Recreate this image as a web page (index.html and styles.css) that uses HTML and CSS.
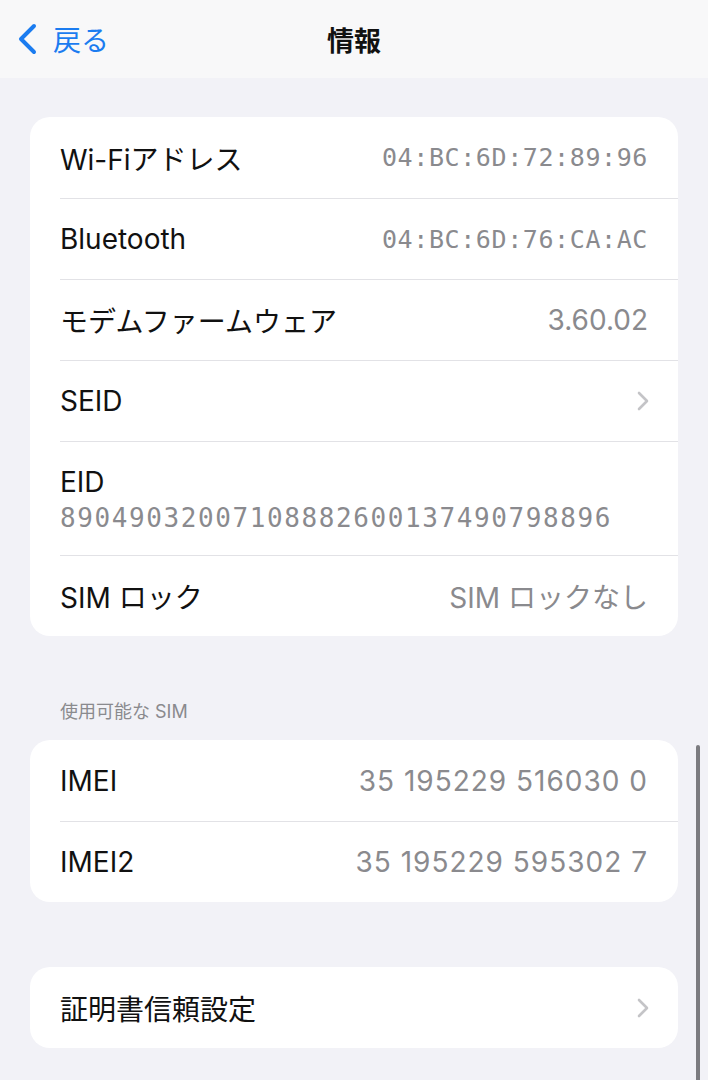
FILE: index.html
```html
<html>
  <head>
    <meta charset="utf-8">
    <title>情報</title>
    <link rel="stylesheet" href="styles.css">
  </head>
<body>
  <div class="navbar">
    <div class="back">
      <svg class="back-icon" width="24" height="32" viewBox="0 0 24 32">
        <path d="M19 3 L6 16 L19 29" fill="none" stroke="#1b7cf0" stroke-width="4" stroke-linecap="round" stroke-linejoin="round"/>
      </svg>
      <span>戻る</span>
    </div>
    <div class="title">情報</div>
    <div></div>
  </div>

  <div class="group first">
    <div class="row">
      <span class="label">Wi-Fiアドレス</span>
      <span class="value mono">04:BC:6D:72:89:96</span>
    </div>
    <div class="row">
      <span class="label">Bluetooth</span>
      <span class="value mono">04:BC:6D:76:CA:AC</span>
    </div>
    <div class="row">
      <span class="label">モデムファームウェア</span>
      <span class="value">3.60.02</span>
    </div>
    <div class="row">
      <span class="label">SEID</span>
      <svg class="chevron" width="14" height="22" viewBox="0 0 14 22">
        <path d="M3 3 L11 11 L3 19" fill="none" stroke="#c4c4c7" stroke-width="2.6" stroke-linecap="round" stroke-linejoin="round"/>
      </svg>
    </div>
    <div class="row tall">
      <span class="label">EID</span>
      <span class="value mono eid">89049032007108882600137490798896</span>
    </div>
    <div class="row">
      <span class="label">SIM ロック</span>
      <span class="value">SIM ロックなし</span>
    </div>
  </div>

  <div class="section-title">使用可能な SIM</div>
  <div class="group">
    <div class="row">
      <span class="label">IMEI</span>
      <span class="value digits">35 195229 516030 0</span>
    </div>
    <div class="row">
      <span class="label">IMEI2</span>
      <span class="value digits">35 195229 595302 7</span>
    </div>
  </div>

  <div class="group last">
    <div class="row">
      <span class="label">証明書信頼設定</span>
      <svg class="chevron" width="14" height="22" viewBox="0 0 14 22">
        <path d="M3 3 L11 11 L3 19" fill="none" stroke="#c4c4c7" stroke-width="2.6" stroke-linecap="round" stroke-linejoin="round"/>
      </svg>
    </div>
  </div>

  <div class="scrollbar"></div>
</body>
</html>
```

FILE: styles.css
```css
body {
  margin: 0;
  background: #f2f2f7;
  font-family: "Inter", "Noto Sans CJK JP", sans-serif;
  color: #111;
  height: 1080px;
  overflow: hidden;
  position: relative;
}

.navbar {
  height: 78px;
  background: #f8f8f9;
  display: grid;
  grid-template-columns: 1fr auto 1fr;
  align-items: center;
}

.back {
  display: flex;
  align-items: center;
  gap: 14px;
  padding-left: 15px;
  color: #1b7cf0;
  font-size: 28px;
}

.back-icon {
  display: block;
}

.title {
  font-size: 27px;
  font-weight: 700;
}

.group {
  background: #fff;
  margin: 0 30px;
  border-radius: 20px;
  overflow: hidden;
}

.group.first {
  margin-top: 39px;
}

.group.last {
  margin-top: 65px;
}

.row {
  height: 81px;
  box-sizing: border-box;
  margin-left: 30px;
  padding-right: 30px;
  display: flex;
  align-items: center;
  justify-content: space-between;
  font-size: 28px;
}

.row + .row {
  border-top: 1px solid #e2e2e6;
}

.row.tall {
  height: 114px;
  flex-direction: column;
  align-items: flex-start;
  justify-content: center;
  gap: 4px;
}

.value {
  color: #8a8a8e;
}

.digits {
  letter-spacing: 1px;
}

.mono {
  font-family: "DejaVu Sans Mono", monospace;
  font-size: 25px;
  letter-spacing: 0.6px;
}

.eid {
  font-size: 26px;
  letter-spacing: 1.6px;
}

.chevron {
  display: block;
  margin-right: -2px;
}

.section-title {
  font-size: 18px;
  color: #8a8a8e;
  padding: 64px 0 16px 60px;
  line-height: 24px;
}

.scrollbar {
  position: absolute;
  right: 8px;
  top: 745px;
  width: 4px;
  height: 340px;
  border-radius: 2px;
  background: #7c7c80;
}
```
